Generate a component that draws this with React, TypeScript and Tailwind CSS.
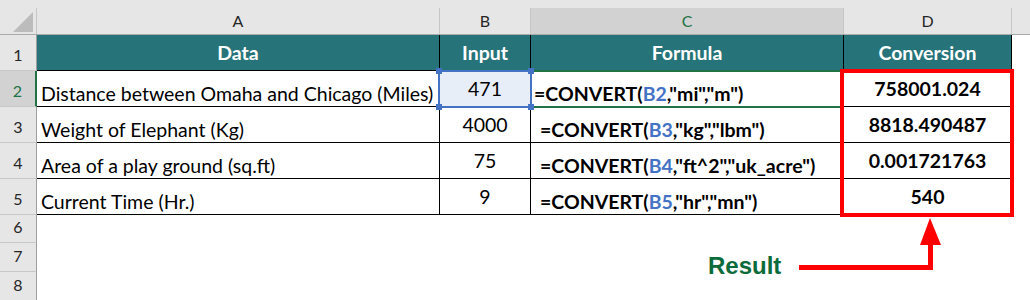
const CELL_FONT = { fontFamily: 'Lato, "Open Sans", sans-serif' };

type Row = {
  data: string;
  input: string;
  ref: string;
  args: string;
  result: string;
};

const ROWS: Row[] = [
  { data: 'Distance between Omaha and Chicago (Miles)', input: '471', ref: 'B2', args: ',"mi","m")', result: '758001.024' },
  { data: 'Weight of Elephant (Kg)', input: '4000', ref: 'B3', args: ',"kg","lbm")', result: '8818.490487' },
  { data: 'Area of a play ground (sq.ft)', input: '75', ref: 'B4', args: ',"ft^2","uk_acre")', result: '0.001721763' },
  { data: 'Current Time (Hr.)', input: '9', ref: 'B5', args: ',"hr","mn")', result: '540' },
];

function ColHeader({ label, active, width }: { label: string; active?: boolean; width: string }) {
  return (
    <div className={`flex h-full flex-col ${width}`}>
      <div className="h-2" />
      <div
        className={`flex flex-1 items-center justify-center border-r border-[#c6c6c6] text-[16px] ${
          active ? 'bg-[#d2d2d2] text-[#217346]' : 'text-[#262626]'
        }`}
      >
        {label}
      </div>
    </div>
  );
}

function RowHeader({ n, active, h }: { n: number; active?: boolean; h: string }) {
  return (
    <div
      className={`flex w-[37px] shrink-0 items-end justify-center border-b border-[#c8c8c8] pb-[3px] text-[16px] ${h} ${
        active
          ? 'border-r-2 border-r-[#217346] bg-[#d2d2d2] text-[#217346]'
          : 'border-r border-r-[#9e9e9e] bg-[#e6e6e6] text-[#262626]'
      }`}
    >
      {n}
    </div>
  );
}

export default function App() {
  return (
    <div className="relative h-[300px] w-[1030px] overflow-hidden bg-white" style={CELL_FONT}>
      {/* column headers */}
      <div className="flex h-[35px] border-b border-[#ababab] bg-[#e6e6e6]">
        <div className="flex w-[37px] shrink-0 flex-col">
          <div className="h-2" />
          <div className="relative flex-1 border-r border-[#c6c6c6]">
            <svg className="absolute left-[13px] top-[4px]" width="21" height="21" viewBox="0 0 21 21">
              <polygon points="20,0 20,20 0,20" fill="#bcbcbc" />
            </svg>
          </div>
        </div>
        <ColHeader label="A" width="w-[403px]" />
        <ColHeader label="B" width="w-[91px]" />
        <ColHeader label="C" width="w-[313px]" active />
        <ColHeader label="D" width="w-[168px]" />
      </div>

      {/* row 1: teal titles */}
      <div className="flex h-[36px]">
        <RowHeader n={1} h="h-[36px]" />
        <div className="flex text-[19.5px] font-bold text-white">
          <div className="flex w-[403px] items-center justify-center border-r border-b border-black bg-[#267479]">Data</div>
          <div className="flex w-[91px] items-center justify-center border-r border-b border-black bg-[#267479]">Input</div>
          <div className="flex w-[313px] items-center justify-center border-r border-b border-black bg-[#267479]">Formula</div>
          <div className="flex w-[168px] items-center justify-center border-r border-b border-black bg-[#267479]">Conversion</div>
        </div>
      </div>

      {/* data rows */}
      {ROWS.map((r, i) => (
        <div key={r.ref} className="flex h-[36px]">
          <RowHeader n={i + 2} h="h-[36px]" active={i === 0} />
          <div className="flex text-[19.5px] text-black">
            <div className="flex w-[403px] items-end border-r border-b border-black pb-[3px] pl-[4px] leading-none">
              {r.data}
            </div>
            <div
              className={`flex w-[91px] items-center justify-center border-r border-b border-black ${
                i === 0 ? 'bg-[#e8eef7]' : ''
              }`}
            >
              {r.input}
            </div>
            <div
              className={`flex w-[313px] items-end border-r border-b border-black pb-[3px] font-bold leading-none ${
                i === 0 ? 'pl-[3px]' : 'pl-[9px]'
              }`}
            >
              <span>
                =CONVERT(<span className="text-[#4472c4]">{r.ref}</span>
                {r.args}
              </span>
            </div>
            <div className="flex w-[168px] items-center justify-center border-r border-b border-black font-bold">
              {r.result}
            </div>
          </div>
        </div>
      ))}

      {/* empty rows */}
      <RowHeader n={6} h="h-[28px]" />
      <RowHeader n={7} h="h-[29px]" />
      <RowHeader n={8} h="h-[29px]" />

      {/* active cell C2 */}
      <div className="absolute left-[530px] top-[70px] h-[38px] w-[314px] border-2 border-[#217346]" />

      {/* referenced range B2 */}
      <div className="absolute left-[438px] top-[70px] h-[38px] w-[94px] border-2 border-[#4472c4]">
        <div className="absolute -left-[4px] -top-[4px] h-[6px] w-[6px] bg-[#4472c4]" />
        <div className="absolute -right-[4px] -top-[4px] h-[6px] w-[6px] bg-[#4472c4]" />
        <div className="absolute -bottom-[4px] -left-[4px] h-[6px] w-[6px] bg-[#4472c4]" />
        <div className="absolute -bottom-[4px] -right-[4px] h-[6px] w-[6px] bg-[#4472c4]" />
      </div>

      {/* result highlight */}
      <div className="absolute left-[840px] top-[69px] h-[148px] w-[174px] border-4 border-[#ff0000]" />

      {/* arrow */}
      <svg className="absolute left-0 top-0" width="1030" height="300" viewBox="0 0 1030 300">
        <polyline points="799,267.5 930.5,267.5 930.5,242" fill="none" stroke="#ff0000" strokeWidth="5" />
        <polygon points="930,218 920,245 941,245" fill="#ff0000" />
      </svg>

      <div
        className="absolute left-[708px] top-[254px] text-[24px] font-bold leading-none text-[#0b6b3b]"
        style={{ fontFamily: '"Liberation Sans", Arial, sans-serif' }}
      >
        Result
      </div>
    </div>
  );
}
